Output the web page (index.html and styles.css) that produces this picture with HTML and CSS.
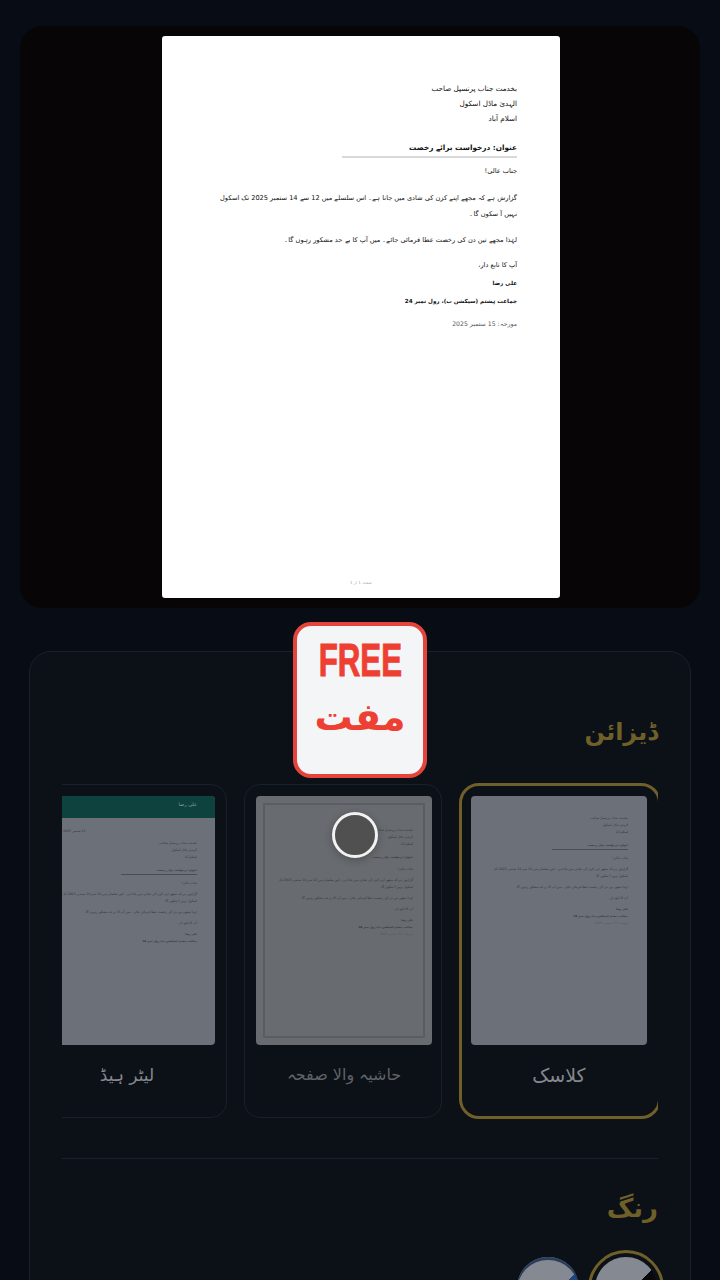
FILE: index.html
```html
<!DOCTYPE html>
<html lang="ur">
<head>
<meta charset="utf-8">
<title>درخواست</title>
<link rel="stylesheet" href="styles.css">
</head>
<body>
<main class="screen">
  <section class="preview">
    <article class="paper doc doc-large" dir="rtl">
      <div class="doc-block">
        <p>بخدمت جناب پرنسپل صاحب</p>
        <p>الہدیٰ ماڈل اسکول</p>
        <p>اسلام آباد</p>
      </div>
      <div class="doc-subject"><strong>عنوان: درخواست برائے رخصت</strong></div>
      <p class="doc-para doc-greeting">جناب عالی!</p>
      <p class="doc-para doc-body">گزارش ہے کہ مجھے اپنے کزن کی شادی میں جانا ہے۔ اس سلسلے میں 12 سے 14 ستمبر 2025 تک اسکول نہیں آ سکوں گا۔</p>
      <p class="doc-para doc-request">لہٰذا مجھے تین دن کی رخصت عطا فرمائی جائے۔ میں آپ کا بے حد مشکور رہوں گا۔</p>
      <p class="doc-para doc-closing">آپ کا تابع دار،</p>
      <div class="doc-sign">
        <p><strong>علی رضا</strong></p>
        <p><strong>جماعت ہشتم (سیکشن ب)، رول نمبر 24</strong></p>
      </div>
      <p class="doc-date">مورخہ: 15 ستمبر 2025</p>
      <p class="doc-foot">صفحہ 1 از 1</p>
    </article>
  </section>

  <section class="panel" dir="rtl">
    <h2 class="section-title">ڈیزائن</h2>
    <div class="designs">
      <div class="design design-active">
        <div class="thumb">
          <div class="doc doc-small">
            <p>بخدمت جناب پرنسپل صاحب</p><p>الہدیٰ ماڈل اسکول</p><p>اسلام آباد</p>
            <div class="doc-subject"><strong>عنوان: درخواست برائے رخصت</strong></div>
            <p class="doc-para">جناب عالی!</p>
            <p class="doc-para">گزارش ہے کہ مجھے اپنے کزن کی شادی میں جانا ہے۔ اس سلسلے میں 12 سے 14 ستمبر 2025 تک اسکول نہیں آ سکوں گا۔</p>
            <p class="doc-para">لہٰذا مجھے تین دن کی رخصت عطا فرمائی جائے۔ میں آپ کا بے حد مشکور رہوں گا۔</p>
            <p class="doc-para">آپ کا تابع دار،</p>
            <p><strong>علی رضا</strong></p><p><strong>جماعت ہشتم (سیکشن ب)، رول نمبر 24</strong></p>
            <p class="doc-para doc-faint">مورخہ: 15 ستمبر 2025</p>
          </div>
        </div>
        <div class="design-name">کلاسک</div>
      </div>
      <div class="design">
        <div class="thumb thumb-framed">
          <div class="frame">
            <div class="doc doc-small">
              <p>بخدمت جناب پرنسپل صاحب</p><p>الہدیٰ ماڈل اسکول</p><p>اسلام آباد</p>
              <div class="doc-subject doc-subject-plain"><strong>عنوان: درخواست برائے رخصت</strong></div>
              <p class="doc-para">جناب عالی!</p>
              <p class="doc-para">گزارش ہے کہ مجھے اپنے کزن کی شادی میں جانا ہے۔ اس سلسلے میں 12 سے 14 ستمبر 2025 تک اسکول نہیں آ سکوں گا۔</p>
              <p class="doc-para">لہٰذا مجھے تین دن کی رخصت عطا فرمائی جائے۔ میں آپ کا بے حد مشکور رہوں گا۔</p>
              <p class="doc-para">آپ کا تابع دار،</p>
              <p><strong>علی رضا</strong></p><p><strong>جماعت ہشتم (سیکشن ب)، رول نمبر 24</strong></p>
              <p class="doc-para doc-faint">مورخہ: 15 ستمبر 2025</p>
            </div>
          </div>
          <span class="touch"></span>
        </div>
        <div class="design-name design-name-dim">حاشیہ والا صفحہ</div>
      </div>
      <div class="design design-last">
        <div class="thumb thumb-letterhead">
          <div class="letterhead"><span>علی رضا</span></div>
          <div class="doc doc-small">
            <p class="doc-date-top">15 ستمبر 2025</p>
            <p>بخدمت جناب پرنسپل صاحب</p><p>الہدیٰ ماڈل اسکول</p><p>اسلام آباد</p>
            <div class="doc-subject"><strong>عنوان: درخواست برائے رخصت</strong></div>
            <p class="doc-para">جناب عالی!</p>
            <p class="doc-para">گزارش ہے کہ مجھے اپنے کزن کی شادی میں جانا ہے۔ اس سلسلے میں 12 سے 14 ستمبر 2025 تک اسکول نہیں آ سکوں گا۔</p>
            <p class="doc-para">لہٰذا مجھے تین دن کی رخصت عطا فرمائی جائے۔ میں آپ کا بے حد مشکور رہوں گا۔</p>
            <p class="doc-para">آپ کا تابع دار،</p>
            <p><strong>علی رضا</strong></p><p><strong>جماعت ہشتم (سیکشن ب)، رول نمبر 24</strong></p>
          </div>
        </div>
        <div class="design-name design-name-last">لیٹر ہیڈ</div>
      </div>
    </div>
    <hr class="divider">
    <h2 class="section-title section-title-color">رنگ</h2>
    <div class="swatches">
      <div class="swatch-ring"><span class="swatch swatch-black"></span></div>
      <span class="swatch swatch-blue"></span>
    </div>
  </section>

  <div class="free-badge">
    <span class="free-en">FREE</span>
    <span class="free-ur" dir="rtl">مفت</span>
  </div>
</main>
</body>
</html>
```
FILE: styles.css
```css
* { box-sizing: border-box; }
html, body { margin: 0; height: 1280px; overflow: hidden; background: #080c15; }
body { font-family: "DejaVu Sans", "Noto Sans", sans-serif; }
p { margin: 0; }

.screen { position: relative; height: 1280px; padding: 26px 20px 0; overflow: hidden; }

.preview {
  height: 582px; border-radius: 22px; background: #080506; padding-left: 2px;
  display: flex; justify-content: center; align-items: center;
}
.paper {
  width: 398px; height: 562px; background: #fff; border-radius: 3px;
  padding: 45px 43px 0 42px; position: relative; color: #111;
}

.doc { font-family: "DejaVu Sans", sans-serif; }
.doc-large { font-size: 7.2px; line-height: 15px; }
.doc-block { margin-bottom: 14px; }
.doc-subject { border-bottom: 2px solid #d9d9d9; width: 175px; padding-bottom: 1px; margin-bottom: 6px; font-size: 7.3px; }
.doc-large .doc-para { font-size: 6.6px; }
.doc-greeting { margin-bottom: 11px; }
.doc-body { margin-bottom: 11px; line-height: 16px; padding-left: 14px; }
.doc-request { margin-bottom: 10px; }
.doc-closing { margin-bottom: 1px; }
.doc-sign { margin-bottom: 6px; font-size: 5.6px; line-height: 18px; }
.doc-date { color: #555; font-size: 6.2px; }
.doc-foot { position: absolute; left: 0; right: 0; bottom: 12px; text-align: center; font-size: 4px; line-height: 6px; color: #aaa; }

.panel {
  height: 800px; margin: 43px 9px 0; padding: 56px 32px 0;
  background: #0c1017; border: 1px solid #1b212c; border-radius: 22px;
}
.section-title {
  margin: 0 0 26px; height: 48px; font-size: 24px; line-height: 48px;
  font-weight: 700; color: #6f5f29; text-align: right;
}
.designs { display: flex; gap: 17px; overflow: hidden; height: 337px; align-items: flex-start; padding-top: 1px; }
.design {
  flex: 0 0 198px; height: 334px; padding: 11px 9px 0 11px;
  border: 1px solid #1a202a; border-radius: 16px; margin-top: 1px;
}
.design-last { padding-right: 11px; padding-left: 10px; }
.design-active {
  flex: 0 0 202px; height: 336px; margin-top: 0; margin-right: -3px; padding: 10px 11px 0 9px;
  border: 3px solid #6f5f29; border-radius: 20px;
}
.thumb {
  position: relative; width: 176px; height: 249px; background: #6c7079; border-radius: 4px;
  padding: 19px 19px 0 14px; overflow: hidden; color: #33363d;
}
.thumb-framed { background: #686b6f; padding: 7px; overflow: visible; }
.frame { height: 100%; border: 2px solid #5a5d61; padding: 22px 10px 0 4px; }
.thumb-letterhead { padding: 0; }
.letterhead { height: 22px; background: #0d423f; padding: 3px 18px 0; font-size: 5px; line-height: 10px; color: #8fa09c; }
.thumb-letterhead .doc { padding: 10px 18px 0 24px; }
.doc-date-top { text-align: left; margin-bottom: 5px; }
.touch {
  position: absolute; top: 16px; left: 76px; width: 46px; height: 46px;
  border: 3px solid #f2f2f2; border-radius: 50%; background: #505050;
  box-shadow: 0 2px 8px rgba(0,0,0,.25);
}
.doc-small { font-size: 3.2px; line-height: 7px; }
.doc-small strong { font-size: 2.7px; }
.doc-small .doc-subject { border-bottom: 1px solid #4a4d54; width: 76px; margin: 6px 0 5px; padding: 0; font-size: 3.2px; }
.doc-small .doc-subject-plain { border-bottom: 0; }
.doc-small .doc-para { margin-bottom: 4px; }
.doc-faint { color: #565a62; }
.design-name { height: 70px; font-size: 19px; line-height: 60px; text-align: center; color: #85888e; white-space: nowrap; }
.design-name-dim { color: #5f6266; font-size: 16px; }
.design-name-last { font-size: 17px; }

.divider { border: 0; height: 1px; background: #1b212c; margin: 39px 0 25px; }
.section-title-color { margin-bottom: 18px; font-size: 26px; }

.swatches { display: flex; gap: 9px; align-items: flex-start; margin-right: -6px; }
.swatch-ring { width: 76px; height: 76px; padding: 4px; border: 3px solid #6f5f29; border-radius: 50%; flex: none; }
.swatch { display: block; width: 62px; height: 62px; border-radius: 50%; flex: none; }
.swatch-black { background: linear-gradient(135deg, #858992 0 56%, #08090b 56%); }
.swatch-blue { margin-top: 7px; background: linear-gradient(135deg, #858992 0 60%, #1e4580 60%); box-shadow: inset 0 3px 0 #2c3d5c; }

.free-badge {
  position: absolute; top: 622px; left: 293px; width: 134px; height: 156px;
  border: 4px solid #e5443c; border-radius: 18px; background: #f4f5f7; color: #ee3f33;
  display: flex; flex-direction: column; align-items: center;
}
.free-en { font-family: "Liberation Sans", sans-serif; font-size: 46px; font-weight: 700; line-height: 44px; margin-top: 12px; transform: scaleX(.68); -webkit-text-stroke: 1px #ee3f33; }
.free-ur { font-size: 38px; font-weight: 700; line-height: 58px; margin-top: 6px; }
```
